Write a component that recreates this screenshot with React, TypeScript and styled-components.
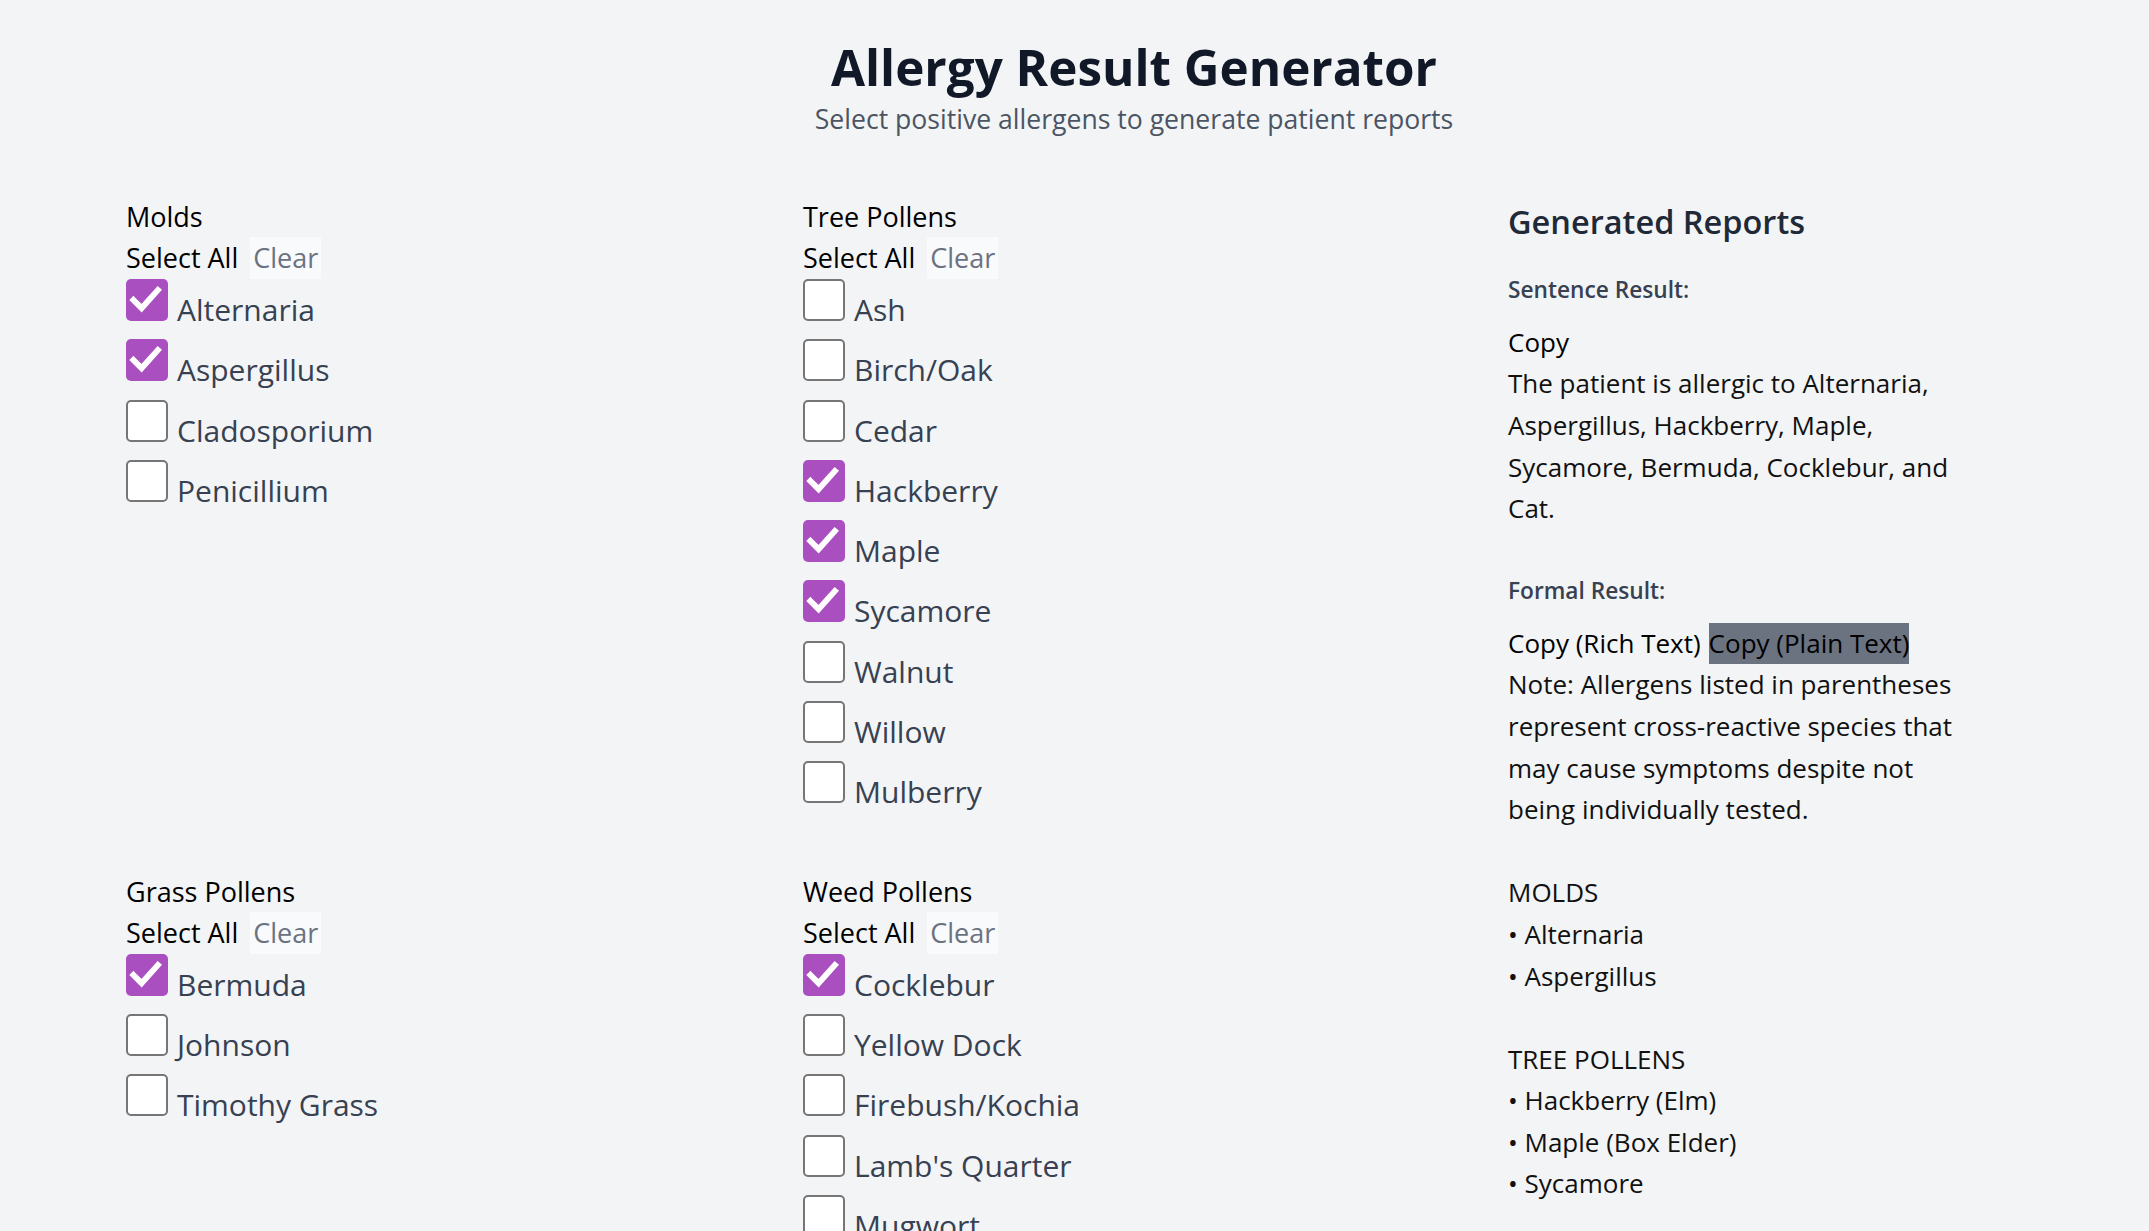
import React, { FC, useState } from 'react';
import styled, { createGlobalStyle } from 'styled-components';

interface IAllergen {
  name: string;
  cross?: string;
}

interface ISection {
  key: string;
  title: string;
  report: string;
  items: IAllergen[];
}

const sections: ISection[] = [
  {
    key: 'molds',
    title: 'Molds',
    report: 'MOLDS',
    items: [{ name: 'Alternaria' }, { name: 'Aspergillus' }, { name: 'Cladosporium' }, { name: 'Penicillium' }],
  },
  {
    key: 'tree',
    title: 'Tree Pollens',
    report: 'TREE POLLENS',
    items: [
      { name: 'Ash' },
      { name: 'Birch/Oak' },
      { name: 'Cedar' },
      { name: 'Hackberry', cross: 'Elm' },
      { name: 'Maple', cross: 'Box Elder' },
      { name: 'Sycamore' },
      { name: 'Walnut' },
      { name: 'Willow' },
      { name: 'Mulberry' },
    ],
  },
  {
    key: 'grass',
    title: 'Grass Pollens',
    report: 'GRASS POLLENS',
    items: [{ name: 'Bermuda' }, { name: 'Johnson' }, { name: 'Timothy Grass' }],
  },
  {
    key: 'weed',
    title: 'Weed Pollens',
    report: 'WEED POLLENS',
    items: [
      { name: 'Cocklebur' },
      { name: 'Yellow Dock' },
      { name: 'Firebush/Kochia' },
      { name: "Lamb's Quarter" },
      { name: 'Mugwort' },
      { name: 'Pigweed' },
      { name: 'Ragweed' },
    ],
  },
  {
    key: 'animals',
    title: 'Animals',
    report: 'ANIMALS',
    items: [{ name: 'Cat' }, { name: 'Dog' }, { name: 'Horse' }],
  },
];

const initialSelected = ['Alternaria', 'Aspergillus', 'Hackberry', 'Maple', 'Sycamore', 'Bermuda', 'Cocklebur', 'Cat'];

const GlobalStyle = createGlobalStyle`
  body {
    margin: 0;
    background-color: #f3f4f6;
    font-family: "Open Sans", "Noto Sans", "Liberation Sans", sans-serif;
  }
`;

const Page = styled.div`
  padding: 38px 7px 60px 126px;
`;

const Header = styled.header`
  text-align: center;
`;

const Title = styled.h1`
  margin: 0;
  font-size: 49.4px;
  line-height: 58px;
  font-weight: 700;
  color: #111827;
`;

const Subtitle = styled.p`
  margin: 3px 0 0;
  font-size: 26.6px;
  line-height: 40px;
  color: #4b5563;
`;

const Main = styled.main`
  display: flex;
  align-items: flex-start;
  margin-top: 58px;
`;

const SectionsGrid = styled.div`
  display: grid;
  grid-template-columns: 649px 649px;
  column-gap: 28px;
  row-gap: 50px;
  align-items: start;
`;

const SectionTitle = styled.h3`
  margin: 0;
  font-size: 27px;
  line-height: 40px;
  font-weight: 400;
  color: #000;
`;

const Actions = styled.div`
  display: flex;
  gap: 12px;
  height: 42px;
`;

const ActionButton = styled.button<{ $muted?: boolean }>`
  height: 42px;
  padding: ${(p) => (p.$muted ? '0 3px' : '0')};
  border: none;
  font-family: inherit;
  font-size: 27px;
  line-height: 42px;
  cursor: pointer;
  color: ${(p) => (p.$muted ? '#6b7280' : '#000')};
  background-color: ${(p) => (p.$muted ? '#f9fafb' : 'transparent')};
`;

const ItemRow = styled.label`
  display: block;
  height: 60.3px;
  font-size: 30px;
  line-height: 44px;
  color: #374151;
  white-space: nowrap;
  cursor: pointer;
`;

const Box = styled.span<{ $checked: boolean }>`
  display: inline-block;
  box-sizing: border-box;
  width: 42px;
  height: 42px;
  margin-right: 9px;
  vertical-align: baseline;
  border-radius: 5px;
  background-color: ${(p) => (p.$checked ? '#a94fc0' : '#fff')};
  border: ${(p) => (p.$checked ? 'none' : '2px solid #767676')};

  svg {
    display: block;
  }
`;

const Reports = styled.aside`
  margin-left: 56px;
  width: 462px;
  color: #111;
`;

const ReportsTitle = styled.h2`
  margin: 0 0 29px;
  padding-top: 3px;
  font-size: 32.5px;
  line-height: 44.8px;
  font-weight: 600;
  color: #1f2937;
`;

const ReportBlock = styled.section`
  margin-bottom: 45px;
`;

const ResultLabel = styled.h4`
  margin: 0 0 16px;
  font-size: 22.7px;
  line-height: 32px;
  font-weight: 600;
  color: #374151;
`;

const CopyRow = styled.div`
  display: flex;
  gap: 8px;
  height: 41.6px;
`;

const CopyButton = styled.button<{ $active?: boolean }>`
  padding: 0;
  border: none;
  font-family: inherit;
  font-size: 26px;
  line-height: 41.6px;
  color: #000;
  cursor: pointer;
  background-color: ${(p) => (p.$active ? '#6b7280' : 'transparent')};
`;

const ReportText = styled.p`
  margin: 0;
  font-size: 26px;
  line-height: 41.6px;
`;

const Group = styled.div`
  margin-top: 41.6px;
  font-size: 26px;
  line-height: 41.6px;
`;

const Check: FC = () => (
  <svg width="38" height="38" viewBox="0 0 42 42" style={{ margin: 2 }}>
    <polyline points="6,21 15,30 33,10" fill="none" stroke="#fff" strokeWidth="6.5" strokeLinecap="square" />
  </svg>
);

const joinList = (names: string[]): string => {
  if (names.length === 0) return '';
  if (names.length === 1) return names[0];
  if (names.length === 2) return `${names[0]} and ${names[1]}`;
  return `${names.slice(0, -1).join(', ')}, and ${names[names.length - 1]}`;
};

const App: FC = () => {
  const [selected, setSelected] = useState<string[]>(initialSelected);
  const [plainActive, setPlainActive] = useState<boolean>(true);

  const toggle = (name: string): void => {
    setSelected(selected.includes(name) ? selected.filter((n) => n !== name) : [...selected, name]);
  };

  const selectAll = (section: ISection): void => {
    const names = section.items.map((i) => i.name);
    setSelected([...selected.filter((n) => !names.includes(n)), ...names]);
  };

  const clear = (section: ISection): void => {
    const names = section.items.map((i) => i.name);
    setSelected(selected.filter((n) => !names.includes(n)));
  };

  const positives = sections.flatMap((s) => s.items.filter((i) => selected.includes(i.name)).map((i) => i.name));
  const sentence = positives.length ? `The patient is allergic to ${joinList(positives)}.` : '';

  return (
    <Page>
      <GlobalStyle />
      <Header>
        <Title>Allergy Result Generator</Title>
        <Subtitle>Select positive allergens to generate patient reports</Subtitle>
      </Header>
      <Main>
        <SectionsGrid>
          {sections.map((section) => (
            <div key={section.key}>
              <SectionTitle>{section.title}</SectionTitle>
              <Actions>
                <ActionButton onClick={() => selectAll(section)}>Select All</ActionButton>
                <ActionButton $muted onClick={() => clear(section)}>Clear</ActionButton>
              </Actions>
              {section.items.map((item) => {
                const checked = selected.includes(item.name);
                return (
                  <ItemRow key={item.name} onClick={() => toggle(item.name)}>
                    <Box $checked={checked}>{checked && <Check />}</Box>
                    {item.name}
                  </ItemRow>
                );
              })}
            </div>
          ))}
        </SectionsGrid>
        <Reports>
          <ReportsTitle>Generated Reports</ReportsTitle>
          <ReportBlock>
            <ResultLabel>Sentence Result:</ResultLabel>
            <CopyRow>
              <CopyButton>Copy</CopyButton>
            </CopyRow>
            <ReportText>{sentence}</ReportText>
          </ReportBlock>
          <ReportBlock>
            <ResultLabel>Formal Result:</ResultLabel>
            <CopyRow>
              <CopyButton onClick={() => setPlainActive(false)}>Copy (Rich Text)</CopyButton>
              <CopyButton $active={plainActive} onClick={() => setPlainActive(true)}>
                Copy (Plain Text)
              </CopyButton>
            </CopyRow>
            <ReportText>
              Note: Allergens listed in parentheses represent cross-reactive species that may cause symptoms despite
              not being individually tested.
            </ReportText>
            {sections.map((section) => {
              const hits = section.items.filter((i) => selected.includes(i.name));
              if (!hits.length) return null;
              return (
                <Group key={section.key}>
                  <div>{section.report}</div>
                  {hits.map((i) => (
                    <div key={i.name}>• {i.cross ? `${i.name} (${i.cross})` : i.name}</div>
                  ))}
                </Group>
              );
            })}
          </ReportBlock>
        </Reports>
      </Main>
    </Page>
  );
};

export default App;
